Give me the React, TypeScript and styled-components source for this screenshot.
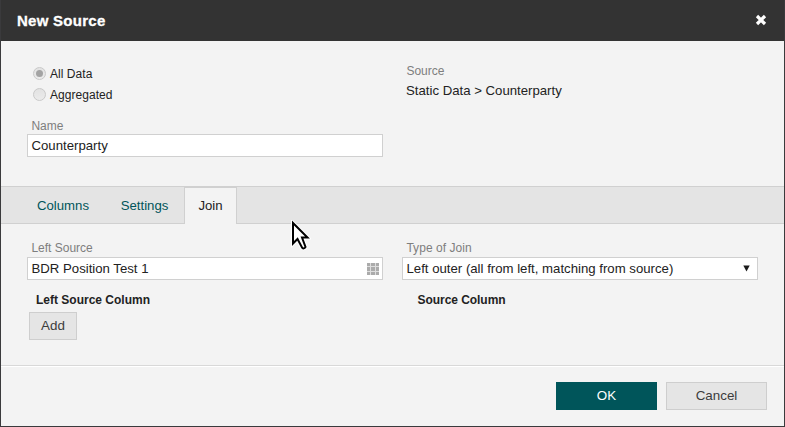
import React from "react";
import styled, { createGlobalStyle } from "styled-components";

const GlobalStyle = createGlobalStyle`
  * { box-sizing: border-box; }
  body {
    margin: 0;
    overflow: hidden;
    background: #333;
    font-family: "Liberation Sans", Arial, sans-serif;
    font-size: 13.2px;
    color: #222;
  }
`;

const Dialog = styled.div`
  position: relative;
  display: flex;
  flex-direction: column;
  width: 785px;
  height: 427px;
  background: #f3f3f3;
  border: solid #3a3a3c;
  border-width: 0 1px 1px;
`;

const Header = styled.header`
  display: flex;
  flex: none;
  align-items: center;
  justify-content: space-between;
  height: 41px;
  padding: 0 17px 0 16px;
  background: #333;
  color: #fff;
`;

const Title = styled.h1`
  margin: 0;
  font-size: 15px;
  line-height: 20px;
  font-weight: bold;
  letter-spacing: 0.27px;
  -webkit-text-stroke: 0.3px #fff;
`;

const CloseButton = styled.button`
  display: flex;
  padding: 0;
  margin-top: -2px;
  border: 0;
  background: none;
`;

const Text = styled.span<{ $spacing?: number }>`
  white-space: nowrap;
  letter-spacing: ${(p) => p.$spacing ?? 0}px;
`;

const General = styled.section`
  display: grid;
  grid-template-columns: 356px 356px;
  column-gap: 19px;
  flex: none;
  height: 145px;
  padding: 22px 26px 0;
`;

const JoinPanel = styled.section`
  display: grid;
  grid-template-columns: 356px 356px;
  column-gap: 19px;
  align-content: start;
  flex: none;
  height: 141px;
  padding: 16px 26px 0;
`;

const RadioRow = styled.label`
  display: flex;
  align-items: center;
  gap: 4px;
  height: 21px;
  padding-left: 6px;
  font-size: 12px;
`;

const Radio = styled.span<{ $checked?: boolean }>`
  display: flex;
  align-items: center;
  justify-content: center;
  width: 13px;
  height: 13px;
  border: 1px solid #c9c9c9;
  border-radius: 50%;
  background: linear-gradient(#e2e2e2, #ebebeb);
  &::after {
    content: "";
    width: 7px;
    height: 7px;
    border-radius: 50%;
    background: ${(p) => (p.$checked ? "#a3a3a3" : "transparent")};
  }
`;

const Label = styled.div<{ $gap?: number; $height?: number }>`
  height: ${(p) => p.$height ?? 17}px;
  padding-left: 4.4px;
  margin-top: ${(p) => p.$gap ?? 0}px;
  font-size: 12px;
  line-height: 17px;
  color: #7e7e7e;
`;

const Value = styled.div`
  height: 20px;
  padding-left: 4px;
  margin-top: 1px;
  line-height: 20px;
`;

const Field = styled.div<{ $right: number }>`
  display: flex;
  align-items: center;
  justify-content: space-between;
  height: 23px;
  padding: 0 ${(p) => p.$right}px 0 3.5px;
  border: 1px solid #d0d0d0;
  background: #fff;
`;

const ColumnTitle = styled.div<{ $left: number }>`
  height: 16px;
  margin: 12px 0 4px;
  padding-left: ${(p) => p.$left}px;
  font-size: 12px;
  font-weight: bold;
  line-height: 16px;
`;

const TabBar = styled.nav`
  display: flex;
  flex: none;
  height: 38px;
  padding-left: 20px;
  border: solid #d0d0d0;
  border-width: 1px 0;
  background: #e4e4e4;
`;

const Tab = styled.button<{ $active?: boolean; $width: number }>`
  width: ${(p) => p.$width}px;
  height: 37px;
  padding: 0 0 1px;
  border: 1px solid ${(p) => (p.$active ? "#d0d0d0" : "transparent")};
  border-bottom: 0;
  background: ${(p) => (p.$active ? "#f3f3f3" : "transparent")};
  color: ${(p) => (p.$active ? "#222" : "#00555a")};
  font: 13.2px "Liberation Sans", Arial, sans-serif;
`;

const Button = styled.button<{ $primary?: boolean; $width: number }>`
  width: ${(p) => p.$width}px;
  height: 28px;
  padding: 0;
  border: 1px solid ${(p) => (p.$primary ? "#00555a" : "#cecece")};
  background: ${(p) => (p.$primary ? "#00555a" : "#e5e5e5")};
  color: ${(p) => (p.$primary ? "#fff" : "#3c3c3c")};
  font: 13.4px/20px "Liberation Sans", Arial, sans-serif;
`;

const AddButton = styled(Button)`
  margin-left: 2px;
`;

const Footer = styled.footer`
  display: flex;
  flex: 1;
  justify-content: flex-end;
  gap: 9px;
  padding: 16px 17px 0 0;
  border-top: 1px solid #d8d8d8;
  box-shadow: inset 0 1px #fff;
`;

const Pointer = styled.svg`
  position: absolute;
  left: 290px;
  top: 220px;
`;

const GridIcon = () => (
  <svg width="12" height="12" viewBox="0 0 12 12" shapeRendering="crispEdges">
    <rect width="12" height="12" fill="#dedede" />
    {[0, 4, 9].map((y) =>
      [0, 4, 9].map((x) => (
        <rect key={`${x}-${y}`} x={x} y={y} width={x === 4 ? 4 : 3} height={y === 4 ? 4 : 3} fill="#ababab" />
      ))
    )}
  </svg>
);

const pointerOutline = "M2 3V23.5L6.5 19L11 27.5Q13 29.5 14.5 27L11 17.5H16.5Z";

export default function App() {
  return (
    <>
      <GlobalStyle />
      <Dialog role="dialog" aria-label="New Source">
        <Header>
          <Title>New Source</Title>
          <CloseButton aria-label="Close">
            <svg width="12" height="12" viewBox="0 0 12 12">
              <path d="M2 2 10 10M10 2 2 10" stroke="#fff" strokeWidth="3.2" />
            </svg>
          </CloseButton>
        </Header>
        <General>
          <div>
            <RadioRow><Radio $checked /><Text $spacing={0.05}>All Data</Text></RadioRow>
            <RadioRow><Radio /><Text $spacing={0.05}>Aggregated</Text></RadioRow>
            <Label $gap={13} $height={16}><Text>Name</Text></Label>
            <Field $right={9}><Text>Counterparty</Text></Field>
          </div>
          <div>
            <Label><Text>Source</Text></Label>
            <Value><Text>Static Data &gt; Counterparty</Text></Value>
          </div>
        </General>
        <TabBar>
          <Tab $width={84}><Text>Columns</Text></Tab>
          <Tab $width={79}><Text>Settings</Text></Tab>
          <Tab $width={53} $active><Text>Join</Text></Tab>
        </TabBar>
        <JoinPanel>
          <div>
            <Label><Text>Left Source</Text></Label>
            <Field $right={3}><Text>BDR Position Test 1</Text><GridIcon /></Field>
            <ColumnTitle $left={9}><Text>Left Source Column</Text></ColumnTitle>
            <AddButton $width={48}>Add</AddButton>
          </div>
          <div>
            <Label><Text $spacing={0.05}>Type of Join</Text></Label>
            <Field $right={7}>
              <Text>Left outer (all from left, matching from source)</Text>
              <svg width="7" height="7" viewBox="0 0 7 7">
                <path d="M0.3 0.5h6.4L3.5 6.5z" fill="#1a1a1a" />
              </svg>
            </Field>
            <ColumnTitle $left={15.5}><Text $spacing={-0.05}>Source Column</Text></ColumnTitle>
          </div>
        </JoinPanel>
        <Footer>
          <Button $width={101} $primary>OK</Button>
          <Button $width={101}>Cancel</Button>
        </Footer>
        <Pointer width="20" height="32" viewBox="0 0 20 32">
          <path d={pointerOutline} fill="none" stroke="#fff" strokeWidth="4" />
          <path d={pointerOutline} fill="#fff" stroke="#000" strokeWidth="2" />
        </Pointer>
      </Dialog>
    </>
  );
}
